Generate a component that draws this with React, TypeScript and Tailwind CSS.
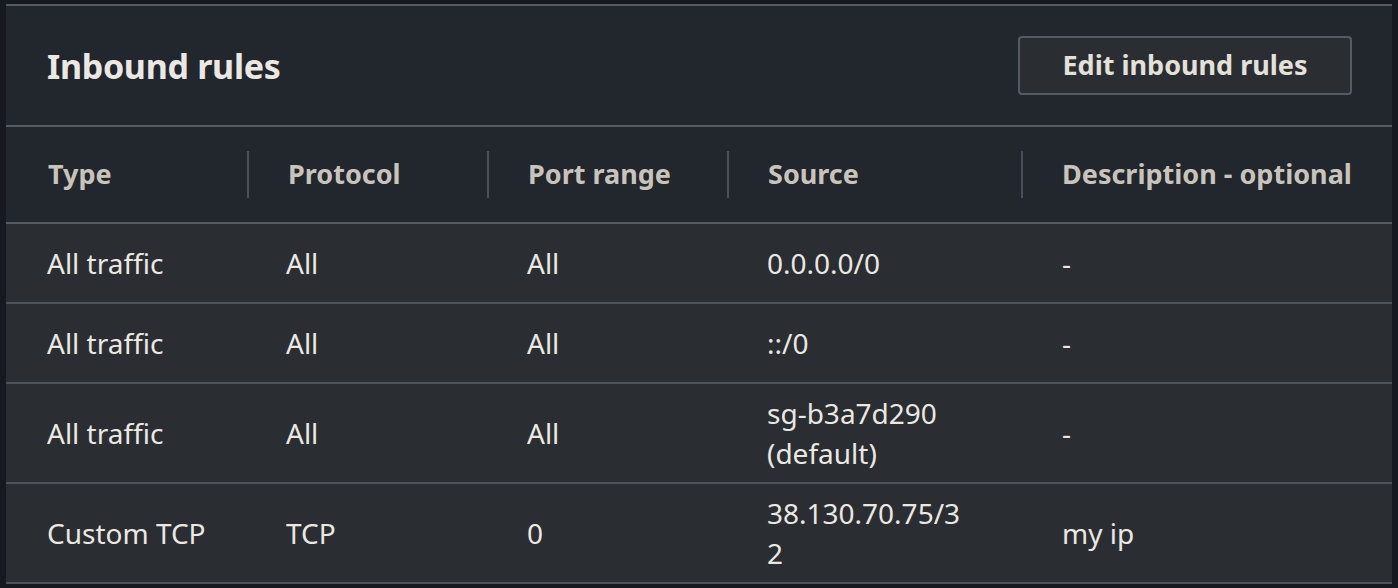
const rows = [
  { type: "All traffic", protocol: "All", port: "All", source: ["0.0.0.0/0"], desc: "-", h: "h-[80px]" },
  { type: "All traffic", protocol: "All", port: "All", source: ["::/0"], desc: "-", h: "h-[80px]" },
  { type: "All traffic", protocol: "All", port: "All", source: ["sg-b3a7d290", "(default)"], desc: "-", h: "h-[100px]" },
  { type: "Custom TCP", protocol: "TCP", port: "0", source: ["38.130.70.75/3", "2"], desc: "my ip", h: "h-[100px]" },
];

const headers = ["Type", "Protocol", "Port range", "Source", "Description - optional"];

const cols = "grid grid-cols-[241px_240px_240px_294px_1fr]";

export default function App() {
  return (
    <div
      className="h-[588px] w-[1398px] bg-[#16191f] pt-[4px] px-[6px] text-[#ebe8e2]"
      style={{ fontFamily: '"Noto Sans", "Open Sans", sans-serif' }}
    >
      <div className="border-t-2 border-[#545b64] bg-[#22262d]">
        {/* header */}
        <div className="flex h-[121px] items-center justify-between border-b-2 border-[#545b64] pl-[41px] pr-[40px]">
          <h2 className="text-[34px] font-bold leading-none tracking-[-0.3px] text-[#ebe8e3]">Inbound rules</h2>
          <button className="flex h-[59px] w-[334px] items-center justify-center rounded-[4px] border-2 border-[#545b64] bg-[#2a2e33] text-[27px] font-bold text-[#e4e1da]">
            Edit inbound rules
          </button>
        </div>

        {/* column headers */}
        <div className={`${cols} h-[97px] border-b-2 border-[#545b64]`}>
          {headers.map((h, i) => (
            <div key={h} className="flex items-center">
              {i > 0 && <div className="h-[47px] w-[2px] bg-[#4a5059]" />}
              <span className={`${i === 0 ? "ml-[42px]" : "ml-[39px]"} text-[27px] font-bold text-[#c9c4bb]`}>
                {h}
              </span>
            </div>
          ))}
        </div>

        {/* rows */}
        <div className="bg-[#2a2d32]">
          {rows.map((r, i) => (
            <div key={i} className={`${cols} ${r.h} border-b-2 border-[#4d535b] text-[28px] leading-[40px]`}>
              <div className="flex items-center pl-[41px]">{r.type}</div>
              <div className="flex items-center pl-[39px]">{r.protocol}</div>
              <div className="flex items-center pl-[40px]">{r.port}</div>
              <div className="flex flex-col justify-center pl-[40px]">
                {r.source.map((s) => (
                  <span key={s}>{s}</span>
                ))}
              </div>
              <div className="flex items-center pl-[41px]">{r.desc}</div>
            </div>
          ))}
        </div>
      </div>
    </div>
  );
}
